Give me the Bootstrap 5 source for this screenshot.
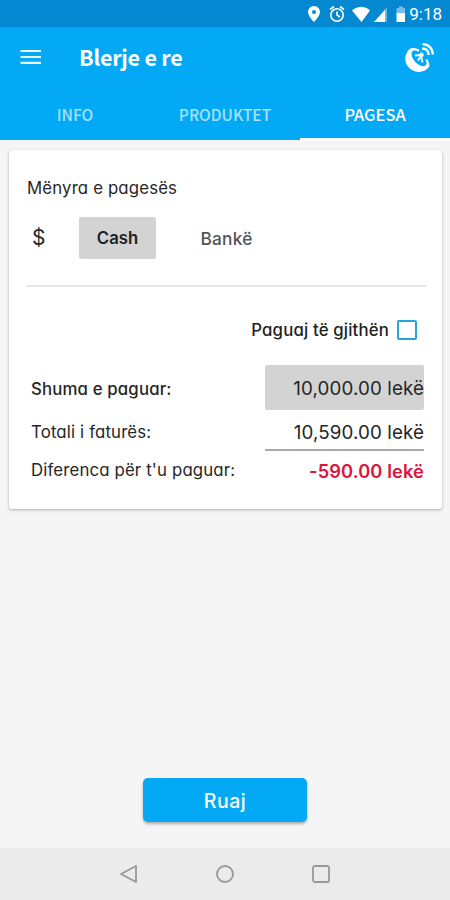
<!DOCTYPE html>
<html lang="sq">
<head>
<meta charset="utf-8">
<meta name="viewport" content="width=device-width, initial-scale=1">
<title>Blerje e re</title>
<link href="https://cdn.jsdelivr.net/npm/bootstrap@5.3.0/dist/css/bootstrap.min.css" rel="stylesheet">
<style>
body{font-family:Inter,"Open Sans",sans-serif;font-feature-settings:"cv11";background:#f5f5f5;color:#262626;font-size:16px;line-height:24px}
.screen{height:900px;overflow:hidden}
.status-bar{height:27px;background:#0388d1;padding:1px 8px 0 0;font:17px/26px Roboto,sans-serif}
.app-header{height:64px;background:#03a9f4;padding:0 15px 4px 20px}
.app-title{font:700 21.5px/30px "Noto Sans CJK SC",sans-serif;margin-left:37px;letter-spacing:-.25px}
.app-tabs{height:49px;background:#03a9f4;--bs-nav-link-padding-y:0;--bs-nav-link-padding-x:0}
.app-tabs .nav-link{height:50px;color:#a5e2fb;font:500 15.5px/46px "Noto Sans CJK SC",sans-serif;border-radius:0}
.app-tabs .nav-link.active{color:#fff;border-bottom:3px solid #f8fcff;height:50px;font-size:16.4px;line-height:47px}
.pay-card{margin:10px 8px 0 9px;height:359px;border:0;border-radius:3px;box-shadow:0 1px 3px rgba(0,0,0,.3);padding:0 17px}
.method-title{margin:26px 0 0 1px;letter-spacing:.15px;font-size:16.8px}
.methods{height:42px;margin-top:17px}
.dollar{width:53px;padding-left:6px;font-size:21px}
.method{width:77px;height:42px;padding:0;border-radius:2px;font-size:16.7px;font-weight:500;--bs-btn-color:#555;border:0;line-height:43px}
.method.chosen{background:#d3d3d3;color:#202020;font-weight:600}
.method.other{margin-left:32px;font-size:17.3px;letter-spacing:.2px}
.split{border-top:2px solid #e6e6e6;margin:26px -1px 0 0}
.pay-all{margin-top:30px;height:26px;padding-right:8px;font-weight:500;font-size:16.8px;letter-spacing:.15px;gap:8px;color:#222}
.pay-all .form-check-input{width:20px;height:20px;border:2px solid #2aa3d9;border-radius:2px;margin:0}
.amounts{margin-top:21px;padding-left:5px}
.amount{width:159px;font-size:18.8px;letter-spacing:.1px;text-align:right;margin-right:1px}
.paid{height:46px}
.paid .amount{background:#d3d3d3;border-radius:2px;height:45px;line-height:48px}
.paid .caption-text{font-weight:500}
.total{height:41px}
.total .amount{height:41px;border-bottom:2px solid #a9a9a9;line-height:46px}
.diff{height:37px}
.diff .amount{color:#dc143c;font-weight:600;font-size:18.3px}
.diff .amount{padding-top:2px}
.caption-text{font-size:16.8px;letter-spacing:.15px}
.paid .caption-text,.total .caption-text{padding-top:3px}
.save{width:164px;height:44px;background:#03a9f4;color:#fff;font-size:19.5px;letter-spacing:.5px;font-weight:500;line-height:47px;border:0;padding:0;border-radius:5px;box-shadow:0 2px 3px rgba(0,0,0,.3);margin-bottom:26px}
.system-nav{height:52px;background:#ebebeb;gap:76px}
</style>
</head>
<body>
<div class="screen d-flex flex-column">
<div class="status-bar d-flex justify-content-end align-items-center text-white">
<svg class="me-1" width="106" height="22" viewBox="0 0 106 22" fill="#fff"><path fill-rule="evenodd" d="M15 3a6 6 0 0 0-6 6c0 4 6 10 6 10s6-6 6-10a6 6 0 0 0-6-6zm0 4a2 2 0 1 1 0 4 2 2 0 0 1 0-4z"/><g fill="none" stroke="#fff" stroke-width="1.6"><circle cx="38" cy="12" r="6.200"/><path d="M38 8.500V12l3 2M31 6.500l4-3M45 6.500l-4-3"/></g><path d="M53 7.500q9.500-7.500 18 0L62.500 19z"/><path opacity=".4" d="M75 19 88 4v15z"/><path d="M75 19 86 7v12z"/><path opacity=".45" d="M98 5h2V3.500h4V5h2v6H97.500V5z"/><path d="M97.500 10H106v9h-8.500z"/></svg><span>9:18</span>
</div>
<header class="app-header navbar flex-nowrap text-white">
<div class="d-flex align-items-center"><svg width="22" height="16" viewBox="0 0 22 16" stroke="#e9faff" stroke-width="2.200"><path d="M.5 2H21M.5 8H21M.5 13.800H21"/></svg><h1 class="app-title mb-0">Blerje e re</h1></div>
<svg width="31" height="31" viewBox="0 0 31 31" fill="none" stroke="#fff"><path fill="#fff" stroke="none" fill-rule="evenodd" d="M4.500 8C-1 15 1 24 8 28c6 3.500 13 2 17-3 1-2 0-5-2-8l-1.500 1c1.500 2.500 1.500 4.500 0 5.500-3 2-9-1-12-6C7 13.500 7 9.500 9 8.800c1.500-.5 3.500 0 5.500 1l1-1.700C12 5.500 7 5 4.500 8z"/><path stroke-width="1.800" d="m11 13.500 6-.5 1.500 7.500M14 18.500l3-4.500"/><circle cx="17.500" cy="12.800" r="2.200" fill="#fff" stroke="none"/><path stroke-width="2.300" d="M18 6.500c4 0 6.500 2.500 6.500 6.500M18.500 2.200c6 0 10.300 4.300 10.300 10.300"/></svg>
</header>
<nav class="app-tabs nav nav-fill"><a class="nav-link col-4" href="#">INFO</a><a class="nav-link col-4" href="#">PRODUKTET</a><a class="nav-link active col-4" href="#">PAGESA</a></nav>
<main class="card pay-card">
<div class="method-title">Mënyra e pagesës</div>
<div class="methods d-flex align-items-center"><span class="dollar">$</span><button class="btn method chosen">Cash</button><button class="btn method other">Bankë</button></div>
<div class="split"></div>
<label class="pay-all d-flex justify-content-end align-items-center"><span>Paguaj të gjithën</span><input class="form-check-input" type="checkbox"></label>
<div class="amounts">
<div class="paid d-flex justify-content-between align-items-center"><span class="caption-text">Shuma e paguar:</span><span class="amount">10,000.00 lekë</span></div>
<div class="total d-flex justify-content-between align-items-center"><span class="caption-text">Totali i faturës:</span><span class="amount">10,590.00 lekë</span></div>
<div class="diff d-flex justify-content-between align-items-center"><span class="caption-text">Diferenca për t'u paguar:</span><span class="amount">-590.00 lekë</span></div>
</div>
</main>
<button class="btn save mt-auto mx-auto">Ruaj</button>
<footer class="system-nav d-flex justify-content-center align-items-center"><svg width="20" height="20" viewBox="0 0 20 20" fill="none" stroke="#999" stroke-width="1.8" stroke-linejoin="round"><path d="M17 2v16L2 10z"/></svg><svg width="20" height="20" viewBox="0 0 20 20" fill="none" stroke="#999" stroke-width="1.8"><circle cx="10" cy="10" r="8"/></svg><svg width="20" height="20" viewBox="0 0 20 20" fill="none" stroke="#999" stroke-width="1.8"><rect x="2" y="2" width="16" height="16" rx="2"/></svg></footer>
</div>
<script src="https://cdn.jsdelivr.net/npm/bootstrap@5.3.0/dist/js/bootstrap.bundle.min.js"></script>
</body>
</html>
